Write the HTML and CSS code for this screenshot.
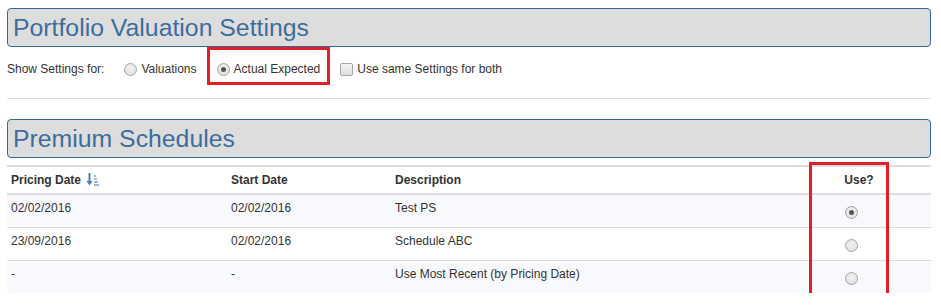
FILE: index.html
```html
<!DOCTYPE html>
<html>
<head>
<meta charset="utf-8">
<link rel="stylesheet" href="styles.css">
</head>
<body>
<div class="page">
  <h2 class="panel-title">Portfolio Valuation Settings</h2>
  <div class="settings-row">
    <span class="settings-label">Show Settings for:</span>
    <label class="opt"><span class="radio"></span>Valuations</label>
    <label class="opt opt-marked"><span class="radio radio-checked"></span>Actual Expected</label>
    <label class="opt"><span class="checkbox"></span>Use same Settings for both</label>
  </div>
  <div class="divider"></div>
  <h2 class="panel-title panel-title-second">Premium Schedules</h2>
  <div class="table-wrap">
    <table class="grid">
      <colgroup>
        <col class="c1"><col class="c2"><col class="c3"><col class="c4">
      </colgroup>
      <thead>
        <tr>
          <th>Pricing Date <svg class="sort-icon" width="13" height="13" viewBox="0 0 13 13"><rect x="2.5" y="0" width="2" height="9" fill="#4a7db3"/><path d="M0.5 8 L3.5 12.5 L6.5 8 Z" fill="#4a7db3"/><rect x="8" y="2" width="2" height="2" fill="#9dbbd8"/><rect x="8" y="5" width="3" height="2" fill="#9dbbd8"/><rect x="8" y="8" width="4" height="2" fill="#9dbbd8"/><rect x="8" y="11" width="5" height="2" fill="#9dbbd8"/></svg></th>
          <th>Start Date</th>
          <th>Description</th>
          <th class="use-col">Use?</th>
        </tr>
      </thead>
      <tbody>
        <tr class="odd">
          <td>02/02/2016</td><td>02/02/2016</td><td>Test PS</td>
          <td class="use-cell"><span class="radio radio-checked"></span></td>
        </tr>
        <tr>
          <td>23/09/2016</td><td>02/02/2016</td><td>Schedule ABC</td>
          <td class="use-cell"><span class="radio"></span></td>
        </tr>
        <tr class="odd">
          <td>-</td><td>-</td><td>Use Most Recent (by Pricing Date)</td>
          <td class="use-cell"><span class="radio"></span></td>
        </tr>
      </tbody>
    </table>
    <div class="use-mark"></div>
  </div>
</div>
</body>
</html>
```
FILE: styles.css
```css
html, body {
  margin: 0;
  padding: 0;
  background: #ffffff;
}
body {
  font-family: "Liberation Sans", Arial, sans-serif;
  font-size: 12px;
  color: #333333;
}
.page {
  margin-left: 7px;
  width: 924px;
  padding-top: 8px;
}
.panel-title {
  box-sizing: border-box;
  margin: 0;
  height: 39px;
  border: 1px solid #34689a;
  border-radius: 4px;
  background: #dddddd;
  color: #3b6d9e;
  font-weight: normal;
  font-size: 24.8px;
  line-height: 37px;
  padding-left: 5px;
}
.panel-title-second {
  margin-top: 20px;
}
.settings-row {
  display: flex;
  align-items: center;
  height: 44px;
  line-height: 17px;
}
.settings-label {
  margin-right: 20px;
}
.opt {
  position: relative;
  display: flex;
  align-items: center;
  margin-right: 20px;
}
.opt-marked::after {
  content: "";
  position: absolute;
  left: -10px;
  top: -14px;
  width: 117px;
  height: 32px;
  border: 3px solid #e41e26;
}
.radio {
  box-sizing: border-box;
  display: inline-block;
  width: 13px;
  height: 13px;
  border-radius: 50%;
  border: 1px solid #a6a6a6;
  background: radial-gradient(circle at 50% 40%, #f2f2f2 0%, #dcdcdc 100%);
  margin-right: 4px;
  position: relative;
  flex: none;
}
.radio-checked::after {
  content: "";
  position: absolute;
  left: 3px;
  top: 3px;
  width: 5px;
  height: 5px;
  border-radius: 50%;
  background: #555555;
}
.checkbox {
  box-sizing: border-box;
  display: inline-block;
  width: 13px;
  height: 13px;
  border-radius: 2px;
  border: 1px solid #a6a6a6;
  background: linear-gradient(#f4f4f4, #dedede);
  margin-right: 4px;
  flex: none;
}
.divider {
  margin-top: 7px;
  border-top: 1px solid #dddddd;
}
.table-wrap {
  position: relative;
  margin-top: 7px;
}
.grid {
  width: 924px;
  border-collapse: collapse;
  table-layout: fixed;
  border-top: 2px solid #dddddd;
}
.c1 { width: 220px; }
.c2 { width: 164px; }
.c3 { width: 418px; }
.c4 { width: 122px; }
.grid th {
  text-align: left;
  font-weight: bold;
  line-height: 17px;
  padding: 5px 4px 4px;
  border-bottom: 2px solid #dddddd;
  vertical-align: top;
}
.grid th.use-col {
  text-align: center;
  padding-right: 26px;
}
.sort-icon {
  vertical-align: -2px;
  margin-left: 2px;
}
.grid td {
  line-height: 17px;
  padding: 5px 4px 10px;
  border-top: 1px solid #dddddd;
  vertical-align: top;
}
.grid tbody tr:first-child td {
  border-top: 0;
}
.grid tr.odd td {
  background: #f8f9fd;
}
.grid td.use-cell {
  text-align: center;
  padding: 11px 38px 0 0;
}
.use-cell .radio {
  margin: 0;
}
.use-mark {
  position: absolute;
  left: 802px;
  top: -3px;
  width: 74px;
  height: 130px;
  border: 3px solid #e41e26;
}
```
